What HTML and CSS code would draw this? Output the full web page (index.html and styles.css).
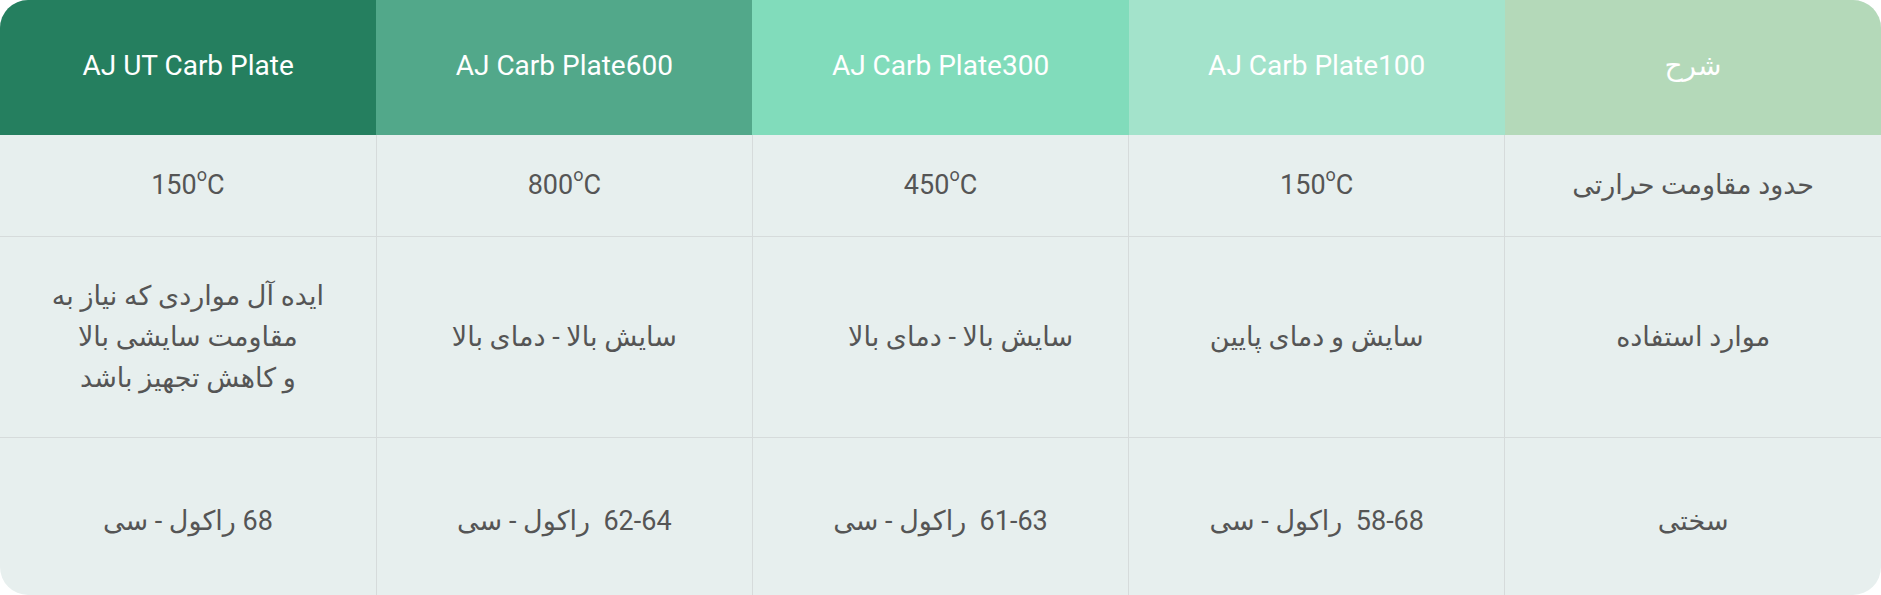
FILE: index.html
```html
<!DOCTYPE html>
<html lang="fa">
<head>
<meta charset="utf-8">
<title>مقایسه AJ Carb Plate</title>
<link rel="stylesheet" href="styles.css">
</head>
<body>
<div class="wrap">
  <table class="spec" dir="rtl">
    <thead>
      <tr>
        <th class="h5">شرح</th>
        <th class="h4">AJ Carb Plate100</th>
        <th class="h3">AJ Carb Plate300</th>
        <th class="h2">AJ Carb Plate600</th>
        <th class="h1">AJ UT Carb Plate</th>
      </tr>
    </thead>
    <tbody>
      <tr class="r1">
        <td>حدود مقاومت حرارتی</td>
        <td class="num">150<sup>o</sup>C</td>
        <td class="num">450<sup>o</sup>C</td>
        <td class="num">800<sup>o</sup>C</td>
        <td class="num">150<sup>o</sup>C</td>
      </tr>
      <tr class="r2">
        <td>موارد استفاده</td>
        <td>سایش و دمای پایین</td>
        <td>سایش بالا - دمای بالا&nbsp;&nbsp;&nbsp;&nbsp;&nbsp;&nbsp;</td>
        <td>سایش بالا - دمای بالا</td>
        <td>ایده آل مواردی که نیاز به<br>مقاومت سایشی بالا<br>و کاهش تجهیز باشد</td>
      </tr>
      <tr class="r3">
        <td>سختی</td>
        <td>58-68&nbsp; راکول - سی</td>
        <td>61-63&nbsp; راکول - سی</td>
        <td>62-64&nbsp; راکول - سی</td>
        <td>68 راکول - سی</td>
      </tr>
    </tbody>
  </table>
</div>
</body>
</html>
```

FILE: styles.css
```css
html, body {
  margin: 0;
  padding: 0;
  background: #ffffff;
}

.wrap {
  width: 1881px;
  height: 595px;
  border-radius: 28px;
  overflow: hidden;
  background: #e7efee;
  box-sizing: border-box;
}

.spec {
  width: 100%;
  border-collapse: collapse;
  table-layout: fixed;
  font-family: Roboto, "DejaVu Sans", sans-serif;
}

.spec th {
  height: 135px;
  padding: 0;
  font-weight: 400;
  font-size: 28px;
  color: #ffffff;
  text-align: center;
  vertical-align: middle;
  padding-bottom: 4px;
  box-sizing: border-box;
}

.h1 { background: #257f5f; }
.h2 { background: #52a88a; }
.h3 { background: #81dcbb; }
.h4 { background: #a3e3cb; }
.h5 { background: #b4d9b9; }

.spec td {
  padding: 0;
  border: 1px solid #d6dbdb;
  text-align: center;
  vertical-align: middle;
  font-size: 27px;
  line-height: 41px;
  color: #555555;
}

.spec td:last-child { border-left: 0; }
.spec td:first-child { border-right: 0; }
.spec tbody tr:first-child td { border-top: 0; }

.r1 td { height: 101px; }
.r2 td { height: 200px; }
.r3 td { height: 155px; padding-top: 6px; }

.spec sup {
  font-size: 18px;
  line-height: 0;
  vertical-align: 13px;
}
```
